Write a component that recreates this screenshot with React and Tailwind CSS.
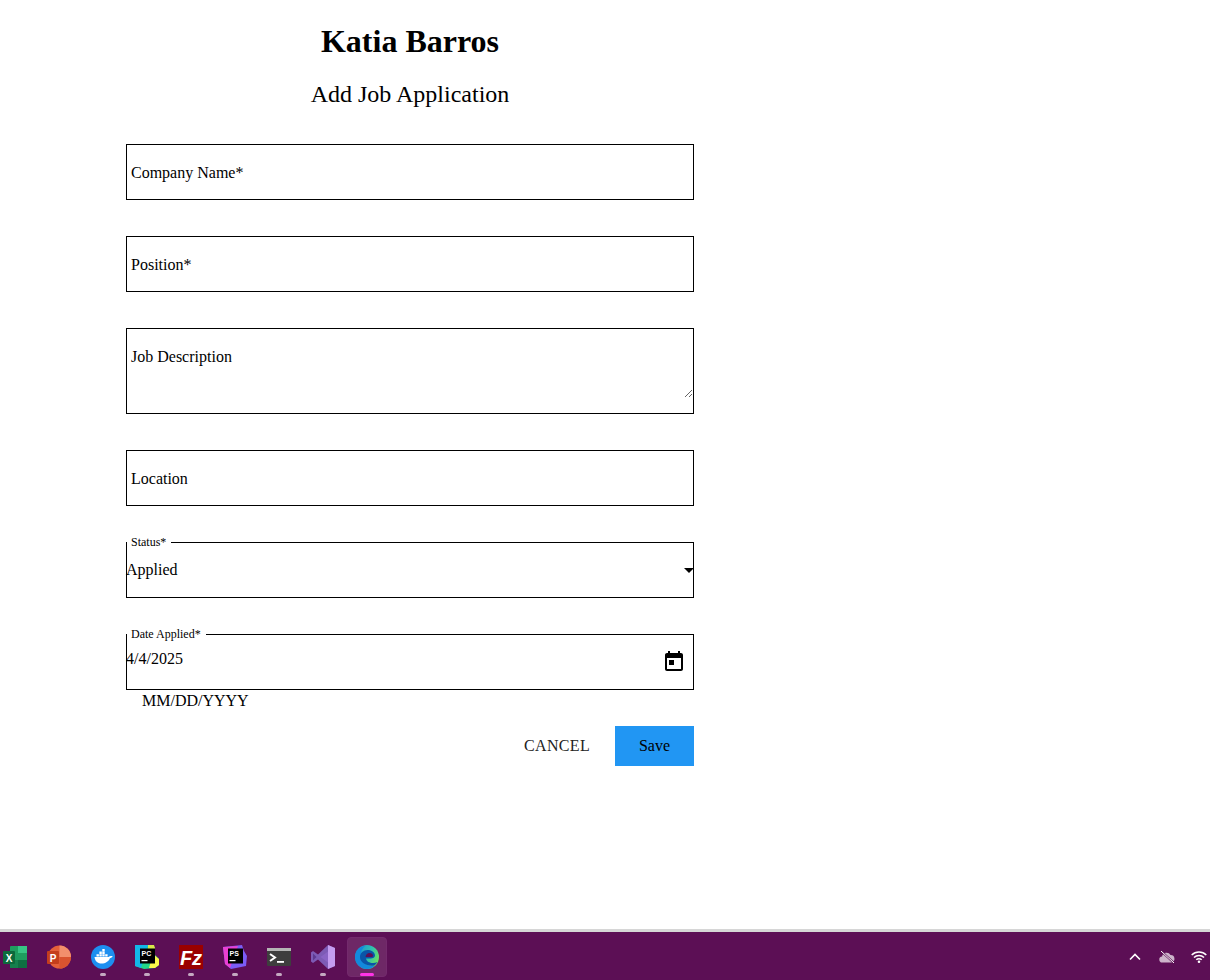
import React from "react";

const TaskIcon = ({ children, pip, active }) => {
  return (
    <div className="relative flex h-full w-11 shrink-0 items-center justify-center">
      {active && <div className="absolute inset-x-[2px] top-[4px] bottom-[3px] rounded-[4px] border border-[#742a6d] bg-[#6e2866]"></div>}
      <div className="relative mt-[1px] h-6 w-6">{children}</div>
      {pip && (
        <div
          className={
            active
              ? "absolute bottom-[4px] left-[15px] h-[3px] w-[14px] rounded-full bg-[#ff33e6]"
              : "absolute bottom-[4px] left-[19px] h-[3px] w-[6px] rounded-full bg-[#c4a9c1]"
          }
        ></div>
      )}
    </div>
  );
};

const Excel = () => (
  <svg viewBox="0 0 24 24" className="h-6 w-6">
    <rect x="7" y="1" width="17" height="22" rx="1" fill="#1f9d5f" />
    <rect x="15" y="1" width="9" height="7" fill="#37c484" />
    <rect x="15" y="8" width="9" height="7" fill="#1f9d5f" />
    <rect x="15" y="15" width="9" height="8" fill="#0f6f42" />
    <rect x="7" y="15" width="8" height="8" fill="#16804d" />
    <rect x="0" y="6" width="12" height="13" rx="1" fill="#0d6a3c" />
    <text x="6" y="16.5" textAnchor="middle" fontSize="10" fontWeight="700" fill="#fff" fontFamily="Liberation Sans, sans-serif">X</text>
  </svg>
);

const Powerpoint = () => (
  <svg viewBox="0 0 24 24" className="h-6 w-6">
    <circle cx="12.500" cy="12" r="11.500" fill="#e5603a" />
    <path d="M12.500.5A11.500 11.500 0 0 1 24 12H12.500z" fill="#f28f6c" />
    <path d="M12.500 12H24a11.500 11.500 0 0 1-11.500 11.500z" fill="#d9532f" />
    <rect x="0" y="6" width="12" height="13" rx="1" fill="#c43e1c" />
    <text x="6" y="16.500" textAnchor="middle" fontSize="10" fontWeight="700" fill="#fff" fontFamily="Liberation Sans, sans-serif">P</text>
  </svg>
);

const Docker = () => (
  <svg viewBox="0 0 24 24" className="h-6 w-6">
    <circle cx="12" cy="12" r="12" fill="#1d8ff0" />
    <path d="M3.500 12h14c.8-.7 1.500-1.100 2.600-1.100.6 0 1.100.1 1.600.4-.6 1.200-1.600 1.800-2.800 1.900-1.300 3.200-4.300 5.300-8.400 5.300-4 0-6.400-2.200-7-6.500z" fill="#fff" />
    <path d="M5.500 9.300h2.400v2.300H5.500zM8.400 9.300h2.400v2.300H8.400zM11.300 9.300h2.400v2.300h-2.400zM8.400 6.600h2.400v2.300H8.400zM11.300 6.600h2.400v2.300h-2.400zM11.300 3.900h2.400v2.300h-2.400zM14.200 9.300h2.400v2.300h-2.400z" fill="#fff" />
  </svg>
);

const Pycharm = () => (
  <svg viewBox="0 0 24 24" className="h-6 w-6">
    <path d="M0 0h17l3 3v7l4 4v6l-4 3-11 1-9-3z" fill="#21d789" />
    <path d="M0 0h13L6 23l-6-2z" fill="#12b7e8" />
    <path d="M13 0h6l1 3v7h-7z" fill="#d7e84a" />
    <path d="M18 9l6 5v6l-4 3-6 0z" fill="#fcf84a" />
    <rect x="5" y="3.500" width="15" height="15" fill="#000" />
    <text x="6.500" y="11" fontSize="7" fontWeight="700" fill="#fff" fontFamily="Liberation Sans, sans-serif">PC</text>
    <rect x="6.500" y="15" width="6" height="1.200" fill="#fff" />
  </svg>
);

const Filezilla = () => (
  <svg viewBox="0 0 24 24" className="h-6 w-6">
    <rect x="0" y="0" width="24" height="24" fill="#9a0000" />
    <text x="12" y="19.500" textAnchor="middle" fontSize="20" fontWeight="700" fontStyle="italic" fill="#fff" fontFamily="Liberation Sans, sans-serif">Fz</text>
  </svg>
);

const Phpstorm = () => (
  <svg viewBox="0 0 24 24" className="h-6 w-6">
    <path d="M0 2l19-2 2 6 3 5-1 10-15 3-6-5z" fill="#7b5cf5" />
    <path d="M0 2l15-1L7 23l-5-4z" fill="#ea3fd2" />
    <rect x="5" y="3.500" width="15" height="15" fill="#000" />
    <text x="6.500" y="11" fontSize="7" fontWeight="700" fill="#fff" fontFamily="Liberation Sans, sans-serif">PS</text>
    <rect x="6.500" y="15" width="6" height="1.200" fill="#fff" />
  </svg>
);

const Terminal = () => (
  <svg viewBox="0 0 24 24" className="h-6 w-6">
    <rect x="0" y="3" width="24" height="18" rx="1" fill="#3e3e3e" />
    <rect x="0" y="3" width="24" height="3" fill="#b5b5b5" />
    <path d="M3 9l5 3.500L3 16" fill="none" stroke="#fff" strokeWidth="2" />
    <rect x="10" y="16" width="7" height="1.800" fill="#fff" />
  </svg>
);

const VisualStudio = () => (
  <svg viewBox="0 0 24 24" className="h-6 w-6">
    <path d="M17 0l7 3v18l-7 3-10-9.500L2 18l-2-1.500v-9L2 6l5 3.500z" fill="#7d5bb5" />
    <path d="M17 0l7 3v18l-7 3z" fill="#c49cf0" />
    <path d="M17 6.500v11L9.500 12z" fill="#8a63c4" />
    <path d="M2 8.500v7L5.500 12z" fill="#5d3a91" />
  </svg>
);

const Edge = () => (
  <svg viewBox="0 0 24 24" className="h-6 w-6">
    <defs>
      <linearGradient id="edgeTop" x1="0" y1="0.3" x2="1" y2="0.7">
        <stop offset="0" stopColor="#1a8fd6" />
        <stop offset="0.55" stopColor="#2fc0b0" />
        <stop offset="1" stopColor="#72e45a" />
      </linearGradient>
    </defs>
    <circle cx="12" cy="12" r="12" fill="url(#edgeTop)" />
    <path d="M0 12C0 6 4.500 1.500 10.500 1 7 3 5.500 7 6 11.500c.5 5.500 5.500 10 13.500 9.500C17.500 23 15 24 12 24 5 24 0 18 0 12z" fill="#1289dc" />
    <path d="M5 12c0-4 3.500-7 7.500-7 4.500 0 7.500 2.500 7.500 5.500 0 2-2 3-4.500 3H11c.5 3 3.500 4.500 7 4.500 1.500 0 3-.3 4.500-1-.8 1.300-1.800 2.500-3 3.500C12 21.500 5 18 5 12z" fill="#0a55a8" />
    <path d="M10.500 12c.3-2.500 2-4 4-4 2 0 3.500 1.300 3.500 2.800 0 .8-.8 1.200-2 1.200z" fill="#5c0f55" />
  </svg>
);

const App = () => {
  return (
    <div className="flex min-h-[980px] flex-col bg-white font-['Liberation_Serif',serif] text-base text-black">
      <main className="ml-[126px] w-[568px] flex-1">
        <h1 className="mt-[23px] text-center text-[32px] leading-[37px] font-bold">Katia Barros</h1>
        <h2 className="mt-5 text-center text-2xl leading-[28px]">Add Job Application</h2>

        <form className="mt-9">
          <div className="flex flex-col gap-9">
            <div className="h-14 border border-black">
              <input className="h-full w-full px-1 pt-[2px] outline-none placeholder:text-black" placeholder="Company Name*" />
            </div>
            <div className="h-14 border border-black">
              <input className="h-full w-full px-1 pt-[2px] outline-none placeholder:text-black" placeholder="Position*" />
            </div>
            <div className="h-[86px] border border-black">
              <textarea
                className="block h-[69px] w-full resize-y px-1 pt-4 outline-none placeholder:text-black"
                placeholder="Job Description"
              ></textarea>
            </div>
            <div className="h-14 border border-black">
              <input className="h-full w-full px-1 pt-[2px] outline-none placeholder:text-black" placeholder="Location" />
            </div>
            <div className="relative flex h-14 items-center justify-between border border-black">
              <span className="absolute -top-[9px] left-0 bg-white pr-[5px] pl-1 text-xs leading-4">Status*</span>
              <span className="-ml-[1px]">Applied</span>
              <svg viewBox="0 0 10 5" className="-mr-[1px] h-[5px] w-[10px]">
                <path d="M0 0h10L5 5z" fill="#000" />
              </svg>
            </div>
            <div className="relative flex h-14 items-start justify-between border border-black">
              <span className="absolute -top-[9px] left-0 bg-white pr-[5px] pl-1 text-xs leading-4">Date Applied*</span>
              <span className="-ml-[1px] mt-3">4/4/2025</span>
              <svg viewBox="0 0 24 24" className="mt-[15px] mr-[7px] h-6 w-6">
                <path d="M19 3h-1V1h-2v2H8V1H6v2H5c-1.110 0-1.990.9-1.990 2L3 19c0 1.100.89 2 2 2h14c1.100 0 2-.9 2-2V5c0-1.100-.9-2-2-2zm0 16H5V8h14v11zM7 10h5v5H7z" fill="#000" />
              </svg>
            </div>
          </div>
          <div className="h-9 pl-4 leading-[22px]">MM/DD/YYYY</div>
          <div className="flex items-center justify-end">
            <button type="button" className="mr-[25px] tracking-[0.33px] text-[#222]">CANCEL</button>
            <button type="button" className="h-10 w-[79px] bg-[#2196f3]">Save</button>
          </div>
        </form>
      </main>

      <div className="flex h-[51px] items-center justify-between overflow-hidden border-t-[3px] border-t-[#d6d6d6] bg-[#5c0f55] pt-[1px]">
        <div className="-ml-[7px] flex h-full">
          <TaskIcon><Excel /></TaskIcon>
          <TaskIcon><Powerpoint /></TaskIcon>
          <TaskIcon pip><Docker /></TaskIcon>
          <TaskIcon pip><Pycharm /></TaskIcon>
          <TaskIcon pip><Filezilla /></TaskIcon>
          <TaskIcon pip><Phpstorm /></TaskIcon>
          <TaskIcon pip><Terminal /></TaskIcon>
          <TaskIcon pip><VisualStudio /></TaskIcon>
          <TaskIcon pip active><Edge /></TaskIcon>
        </div>
        <div className="flex items-center pr-[3px]">
          <svg viewBox="0 0 12 8" className="mr-[18px] h-2 w-3">
            <path d="M1 6.500l5-5 5 5" fill="none" stroke="#fff" strokeWidth="1.600" />
          </svg>
          <svg viewBox="0 0 16 12" className="mr-4 h-3 w-4">
            <path d="M3.500 11.500a3 3 0 0 1-.4-6A4.500 4.500 0 0 1 11.500 4a3.800 3.800 0 0 1 1 7.500z" fill="#cdb4ca" />
            <path d="M2 0l13 12" stroke="#5c0f55" strokeWidth="2" />
            <path d="M2 0l13 12" stroke="#fff" strokeWidth="1" />
          </svg>
          <svg viewBox="0 0 16 12" className="h-3 w-4">
            <path d="M.7 4a10.500 10.500 0 0 1 14.600 0M3 6.500a7 7 0 0 1 10 0M5.300 8.800a3.700 3.700 0 0 1 5.400 0" fill="none" stroke="#fff" strokeWidth="1.500" />
            <circle cx="8" cy="10.700" r="1.300" fill="#fff" />
          </svg>
        </div>
      </div>
    </div>
  );
};

export default App;
